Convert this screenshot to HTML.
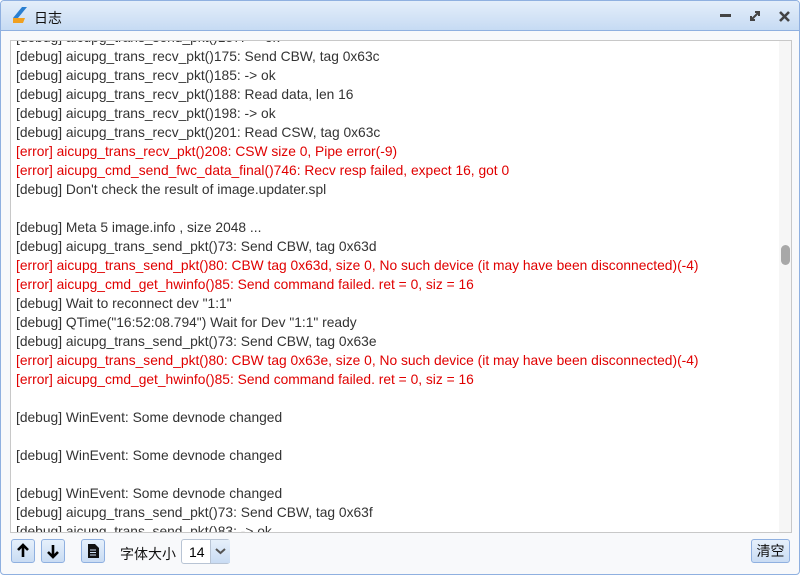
<!DOCTYPE html>
<html><head><meta charset="utf-8"><style>
body{margin:0;width:800px;height:575px;overflow:hidden;background:#fff;font-family:"Liberation Sans","Noto Sans CJK SC",sans-serif;}
.win{position:absolute;left:0;top:0;width:798px;height:573px;border:1px solid #8fb0e0;border-radius:4px;background:#f8f9fb;overflow:hidden}
.title{position:absolute;left:0;top:0;right:0;height:29px;background:linear-gradient(#e4eefa,#c6dbf3);border-bottom:1px solid #8fb0e0}
.title span{position:absolute;left:33px;top:7px;font-size:14px;color:#111}
.box{position:absolute;left:9px;top:39px;width:780px;height:491px;border:1px solid #c8c8c8;background:#fff;overflow:hidden}
.track{position:absolute;right:0;top:0;width:12px;height:100%;background:#f6f6f6}
.thumb{position:absolute;left:2px;top:204px;width:9px;height:20px;border-radius:5px;background:#a8a8a8}
.txt{position:absolute;left:5px;top:-13px;font-size:13.8px;line-height:19px;color:#333;white-space:pre}
.e{color:#e00000}
.btn{position:absolute;top:538px;height:24px;border:1px solid #8fb0e0;border-radius:3px;background:linear-gradient(#e6f0fb,#c9dcf3);box-sizing:border-box}
</style></head><body><div class="win">
<div class="title">
<svg style="position:absolute;left:10px;top:5px" width="18" height="18" viewBox="0 0 18 18"><polygon points="11,1 16,1 7,12 2,12" fill="#2a7fd0"/><polygon points="2,12 14,12 12,17 2,17" fill="#f0a020"/></svg>
<span>日志</span>
<div style="position:absolute;left:719px;top:13px;width:11px;height:3px;background:#444"></div>
<svg style="position:absolute;left:747px;top:8px" width="14" height="14" viewBox="0 0 14 14"><path d="M3 11L11 3M7 3h4v4M3 7v4h4" stroke="#444" stroke-width="2" fill="none"/></svg>
<svg style="position:absolute;left:778px;top:10px" width="11" height="11" viewBox="0 0 11 11"><path d="M1 1L10 10M10 1L1 10" stroke="#444" stroke-width="2.6"/></svg>
</div>
<div class="box"><div class="track"><div class="thumb"></div></div>
<div class="txt">[debug] aicupg_trans_send_pkt()187: -> ok
[debug] aicupg_trans_recv_pkt()175: Send CBW, tag 0x63c
[debug] aicupg_trans_recv_pkt()185: -> ok
[debug] aicupg_trans_recv_pkt()188: Read data, len 16
[debug] aicupg_trans_recv_pkt()198: -> ok
[debug] aicupg_trans_recv_pkt()201: Read CSW, tag 0x63c
<span class="e">[error] aicupg_trans_recv_pkt()208: CSW size 0, Pipe error(-9)</span>
<span class="e">[error] aicupg_cmd_send_fwc_data_final()746: Recv resp failed, expect 16, got 0</span>
[debug] Don't check the result of image.updater.spl

[debug] Meta 5 image.info , size 2048 ...
[debug] aicupg_trans_send_pkt()73: Send CBW, tag 0x63d
<span class="e">[error] aicupg_trans_send_pkt()80: CBW tag 0x63d, size 0, No such device (it may have been disconnected)(-4)</span>
<span class="e">[error] aicupg_cmd_get_hwinfo()85: Send command failed. ret = 0, siz = 16</span>
[debug] Wait to reconnect dev "1:1"
[debug] QTime("16:52:08.794") Wait for Dev "1:1" ready
[debug] aicupg_trans_send_pkt()73: Send CBW, tag 0x63e
<span class="e">[error] aicupg_trans_send_pkt()80: CBW tag 0x63e, size 0, No such device (it may have been disconnected)(-4)</span>
<span class="e">[error] aicupg_cmd_get_hwinfo()85: Send command failed. ret = 0, siz = 16</span>

[debug] WinEvent: Some devnode changed

[debug] WinEvent: Some devnode changed

[debug] WinEvent: Some devnode changed
[debug] aicupg_trans_send_pkt()73: Send CBW, tag 0x63f
[debug] aicupg_trans_send_pkt()83: -> ok</div></div>
<div class="btn" style="left:10px;width:24px"><svg width="22" height="22" viewBox="0 0 22 22"><path d="M11 17V6M6 10l5-5 5 5" stroke="#000" stroke-width="2.6" fill="none"/></svg></div>
<div class="btn" style="left:40px;width:24px"><svg width="22" height="22" viewBox="0 0 22 22"><path d="M11 5v11M6 12l5 5 5-5" stroke="#000" stroke-width="2.6" fill="none"/></svg></div>
<div class="btn" style="left:80px;width:24px"><svg width="22" height="22" viewBox="0 0 22 22"><path d="M6 4h7l4 4v10H6z" fill="#111"/><path d="M8 10h6M8 12.5h6M8 15h6" stroke="#cfe0f5" stroke-width="1"/></svg></div>
<div style="position:absolute;left:119px;top:543px;font-size:14px;color:#111">字体大小</div>
<div style="position:absolute;left:180px;top:538px;width:49px;height:25px;border:1px solid #b8c4d4;border-radius:3px;background:#fff;box-sizing:border-box">
<span style="position:absolute;left:7px;top:4px;font-size:14px">14</span>
<div style="position:absolute;left:28px;top:0;width:19px;height:23px;background:linear-gradient(#e6f0fb,#c9dcf3);border-left:1px solid #b8c4d4"><svg width="19" height="23" viewBox="0 0 19 23"><path d="M5 9l4.5 4 4.5-4" stroke="#555" stroke-width="2" fill="none"/></svg></div></div>
<div class="btn" style="left:750px;width:39px;font-size:14px;text-align:center;line-height:22px;color:#111">清空</div>
</div></body></html>
